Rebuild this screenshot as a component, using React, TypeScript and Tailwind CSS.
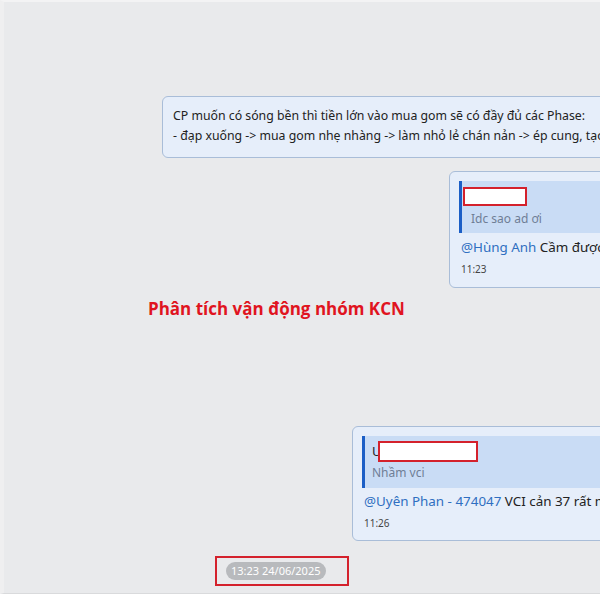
import React from "react";

const font = { fontFamily: '"Noto Sans", "Open Sans", sans-serif' };

export default function App() {
  return (
    <div className="w-[600px] h-[600px] bg-white overflow-hidden" style={font}>
      <div className="h-[594px] bg-[#e9eaec] border-b border-[#d9dadc] flex flex-col overflow-hidden border-t-2 border-t-[#f3f3f4] border-l-[4px] border-l-[#efeff0]">
        {/* Bubble 1 */}
        <div className="mt-[94px] ml-[158px] w-[600px] shrink-0 h-[62px] bg-[#e6eefa] border border-[#a9bdd8] rounded-[6px] pl-[10px] pt-[9px] text-[12.3px] leading-[20px] text-[#222] whitespace-nowrap">
          <div>CP muốn có sóng bền thì tiền lớn vào mua gom sẽ có đầy đủ các Phase:</div>
          <div>- đạp xuống -&gt; mua gom nhẹ nhàng -&gt; làm nhỏ lẻ chán nản -&gt; ép cung, tạo đáy</div>
        </div>

        {/* Bubble 2 */}
        <div className="mt-[13px] ml-[445px] w-[400px] shrink-0 h-[117px] bg-[#e6eefa] border border-[#a9bdd8] rounded-[6px] pl-[9px] pt-[9px] whitespace-nowrap">
          <div className="h-[52px] bg-[#c9dcf5] border-l-[3px] border-[#1b5ec6] pl-[1px] pt-[6px]">
            <div className="w-[64px] h-[19px] bg-white border-2 border-[#d4212c]"></div>
            <div className="mt-[5px] pl-[8px] text-[12px] leading-[16px] text-[#6f7e95]">Idc sao ad ơi</div>
          </div>
          <div className="mt-[4px] pl-[2px] text-[13.4px] leading-[20px] text-[#222]">
            <span className="text-[#2f6fc1]">@Hùng Anh</span> Cầm được anh ơi
          </div>
          <div className="mt-[5px] pl-[2px] text-[10px] leading-[14px] text-[#444]">11:23</div>
        </div>

        {/* Title */}
        <div className="mt-[10px] ml-[144px] text-[17px] leading-[22px] font-bold text-[#e0141f] whitespace-nowrap" style={{ fontFamily: '"Open Sans", "Noto Sans", sans-serif' }}>
          Phân tích vận động nhóm KCN
        </div>

        {/* Bubble 3 */}
        <div className="mt-[106px] ml-[348px] w-[400px] shrink-0 h-[115px] bg-[#e6eefa] border border-[#a9bdd8] rounded-[6px] pl-[9px] pt-[9px] whitespace-nowrap">
          <div className="h-[52px] bg-[#c9dcf5] border-l-[3px] border-[#1b5ec6] pl-[7px] pt-[5px]">
            <div className="relative h-[21px] text-[13px] leading-[21px] text-[#222]">
              U
              <div className="absolute left-[6px] top-0 w-[100px] h-[21px] bg-white border-2 border-[#d4212c]"></div>
            </div>
            <div className="mt-[3px] text-[12px] leading-[16px] text-[#6f7e95]">Nhầm vci</div>
          </div>
          <div className="mt-[3px] pl-[2px] text-[13.4px] leading-[20px] text-[#222]">
            <span className="text-[#2f6fc1]">@Uyên Phan - 474047</span> VCI cản 37 rất mạnh
          </div>
          <div className="mt-[5px] pl-[2px] text-[10px] leading-[14px] text-[#444]">11:26</div>
        </div>

        {/* Timestamp */}
        <div className="mt-[15px] ml-[211px] w-[134px] h-[30px] shrink-0 border-2 border-[#d4212c] flex items-center pl-[9px]">
          <div className="h-[18px] px-[5px] rounded-full bg-[#b8babd] text-white text-[11px] leading-[18px] whitespace-nowrap">
            13:23 24/06/2025
          </div>
        </div>
      </div>
    </div>
  );
}
